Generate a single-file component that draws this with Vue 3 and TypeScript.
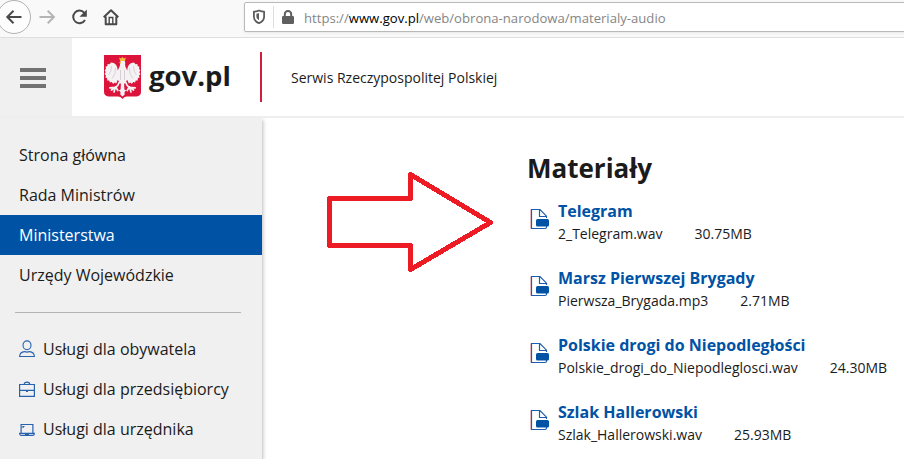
<script setup lang="ts">
type IconName = 'person' | 'briefcase' | 'laptop'

interface Material {
  title: string
  file: string
  size: string
}

const sections: { label: string; active?: boolean }[] = [
  { label: 'Strona główna' },
  { label: 'Rada Ministrów' },
  { label: 'Ministerstwa', active: true },
  { label: 'Urzędy Wojewódzkie' },
]

const services: { label: string; icon: IconName }[] = [
  { label: 'Usługi dla obywatela', icon: 'person' },
  { label: 'Usługi dla przedsiębiorcy', icon: 'briefcase' },
  { label: 'Usługi dla urzędnika', icon: 'laptop' },
]

const materials: Material[] = [
  { title: 'Telegram', file: '2_Telegram.wav', size: '30.75MB' },
  { title: 'Marsz Pierwszej Brygady', file: 'Pierwsza_Brygada.mp3', size: '2.71MB' },
  { title: 'Polskie drogi do Niepodległości', file: 'Polskie_drogi_do_Niepodleglosci.wav', size: '24.30MB' },
  { title: 'Szlak Hallerowski', file: 'Szlak_Hallerowski.wav', size: '25.93MB' },
]
</script>

<template>
  <div class="window">
    <div class="toolbar">
      <svg class="nav-icons" width="130" height="37" viewBox="0 0 130 37" fill="none">
        <circle cx="14" cy="17" r="16.5" fill="#fdfdfd" stroke="#b1b1b1" />
        <path d="M21.5 17H7.5M13.5 10.8L7.3 17l6.2 6.2" stroke="#4a4a4a" stroke-width="2" />
        <path d="M39.5 17h14M47.7 10.8l6.2 6.2-6.2 6.2" stroke="#b5b5b5" stroke-width="2" />
        <path d="M84.3 12.8A6.3 6.3 0 1 0 85 20" stroke="#4a4a4a" stroke-width="2" />
        <path d="M86.8 9.6v7.2h-7.3z" fill="#4a4a4a" />
        <path d="M103.7 17.3l7.3-7 7.3 7M105.7 16.5v7.7h10.6v-7.7" stroke="#4a4a4a" stroke-width="2" stroke-linejoin="round" />
        <path d="M109.2 24v-6.5h3.6V24" stroke="#4a4a4a" stroke-width="1.4" />
      </svg>
      <div class="address">
        <svg class="shield" width="14" height="16" viewBox="0 0 14 16" fill="none">
          <path d="M7 1.5c2 .9 3.5 1.2 5.1 1.2v5c0 3-2 5.2-5.1 6.5-3.1-1.3-5.1-3.5-5.1-6.5v-5c1.6 0 3.1-.3 5.1-1.2z" stroke="#5c5c5c" stroke-width="1.8" stroke-linejoin="round" />
          <path d="M7 4v7.2C5.2 10 4.4 9 4.4 7.2V4.7C5.5 4.6 6.2 4.4 7 4z" fill="#5c5c5c" />
        </svg>
        <span class="separator"></span>
        <svg class="lock" width="12" height="14" viewBox="0 0 12 14">
          <rect y="6" width="12" height="8" rx="1.2" fill="#5f5f5f" />
          <path d="M2.8 7V4.2a3.2 3.2 0 0 1 6.4 0V7" fill="none" stroke="#5f5f5f" stroke-width="2" />
        </svg>
        <span class="url">https://<b>www.gov.pl</b>/web/obrona-narodowa/materialy-audio</span>
      </div>
    </div>

    <header class="header">
      <div class="burger"><i></i><i></i><i></i></div>
      <svg class="emblem" width="37" height="44" viewBox="0 0 37 44">
        <path d="M0 0h37v36.5q0 4.5-4.5 5h-10q-2.4.2-4 2.5-1.6-2.3-4-2.5h-10Q0 41 0 36.5z" fill="#dc143c" />
        <g fill="#f5f2f4">
          <path id="wing" d="M7 7.500c4 0 6.500 3 6.700 7.500l2 3.500v8l-2-1.500-1.500 3.500-1.500-1-1.500 1.500-1.400-2-1.800.6-.8-2.200-2 .2v-2.400l-1.800-.6.6-2-1.500-1.600 1.200-1.700-1-2 1.300-1.600-.5-2 1.900-.8.200-2 1.900.4z" />
          <path d="M30 7.500c-4 0-6.500 3-6.700 7.500l-2 3.500v8l2-1.500 1.500 3.500 1.500-1 1.500 1.500 1.400-2 1.800.6.800-2.200 2 .2v-2.400l1.800-.6-.6-2 1.500-1.600-1.200-1.700 1-2-1.300-1.600.5-2-1.900-.8-.2-2-1.900.4z" />
          <path d="M16 8.500c0-2.500 1-3.500 2.700-3.500s2.800 1.300 2.500 3.200c-.3 1.800.1 3.300 1.200 5.300 1.300 2.500 1.400 6.500.6 10.500l-2 4.500h-5l-2-4.500c-.8-4-.7-8 .6-10.500 1.100-2 1.600-3.200 1.400-5z" />
          <path d="M17 27h3l.4 7.500 1.800 1-1.700 1.500.2 2.500-2.200 2-2.200-2 .2-2.500-1.700-1.500 1.800-1z" />
        </g>
        <path d="M15.300 27q-1.300 4.500-4.200 5.300l-5.300.5M11.500 32l-4 3M11.500 32l-1.500 5M11.800 32l2 3.500M21.700 27q1.300 4.500 4.200 5.300l5.300.5M25.500 32l4 3M25.500 32l1.500 5M25.200 32l-2 3.500" fill="none" stroke="#f5f2f4" stroke-width="1.7" stroke-linecap="round" />
        <path d="M11.500 13q.5 6-3.400 10.500M25.500 13q-.5 6 3.400 10.500M7.500 11q0 6-3 9M29.500 11q0 6 3 9M16.500 15v10M20.500 15v10" fill="none" stroke="#d0c6cd" stroke-width=".8" />
        <path d="M16 6l-.8-3.600 2 1 1.300-1.700 1.300 1.700 2-1-.8 3.600zM17 7l-2.400.8L17 8.800z" fill="#f6bd40" />
      </svg>
      <span class="brand">gov.pl</span>
      <span class="rule"></span>
      <span class="tagline">Serwis Rzeczypospolitej Polskiej</span>
    </header>

    <div class="body">
      <aside class="sidebar">
        <nav>
          <a v-for="s in sections" :key="s.label" class="item" :class="{ active: s.active }">{{ s.label }}</a>
        </nav>
        <div class="divider"></div>
        <nav>
          <a v-for="s in services" :key="s.label" class="item service">
            <svg width="16" height="18" viewBox="0 0 16 18" fill="none" stroke="#2861ae" stroke-width="1.1">
              <template v-if="s.icon === 'person'">
                <ellipse cx="8" cy="5.3" rx="4" ry="4.4" />
                <path d="M.6 16.5c.2-3.2 2.4-4.7 4.9-4.9q2.5 1 5 0c2.5.2 4.7 1.7 4.9 4.9z" />
              </template>
              <template v-else-if="s.icon === 'briefcase'">
                <path d="M.6 4.5h14.8v11.8H.6zM.6 10.3h14.8M5.2 4.5Q5.2 2.2 8 2.2t2.8 2.3" stroke-width="1.2" />
                <path d="M7 11.5h2" />
              </template>
              <template v-else>
                <path d="M2.1 13.3V4.5h11.8v8.800M4 8V6.5h1.500" stroke-width="1.2" />
                <path d="M.6 13.3h14.8q0 2-1.500 2H2.100q-1.500 0-1.500-2zM6 14.200h4" stroke-width="1.2" />
              </template>
            </svg>
            {{ s.label }}
          </a>
        </nav>
      </aside>

      <main class="content">
        <h2>Materiały</h2>
        <ul>
          <li v-for="m in materials" :key="m.file">
            <svg class="doc" width="20" height="22" viewBox="0 0 20 22" fill="none">
              <path d="M16.5 18v1q0 1.5-1.5 1.5H1.5V1.5H10l6.500 6.700V10M9.500 1.500v7h7" stroke="#1c5dad" stroke-width="1.2" />
              <path d="M.5 1.500v19" stroke="#e0a4b0" stroke-width=".7" />
              <rect x="6" y="11" width="13" height="7.500" rx="1.5" fill="#0052a5" />
            </svg>
            <div>
              <a class="title">{{ m.title }}</a>
              <div class="meta"><span>{{ m.file }}</span><span>{{ m.size }}</span></div>
            </div>
          </li>
        </ul>
      </main>
    </div>

    <svg class="arrow" width="172" height="106" viewBox="0 0 172 106">
      <path d="M4.5 32.5h81V8.5l80 48-80 47V79.5h-81z" fill="none" stroke="#ed1c24" stroke-width="5" stroke-linejoin="round" shape-rendering="crispEdges" />
    </svg>
  </div>
</template>

<style>
body {
  margin: 0;
  overflow: hidden;
}
</style>

<style scoped>
.window {
  position: relative;
  width: 904px;
  height: 459px;
  overflow: hidden;
  display: flex;
  flex-direction: column;
  background: #fff;
  color: #1b1b1b;
  font-family: "Open Sans", "Noto Sans", sans-serif;
}
.toolbar {
  flex: none;
  display: flex;
  height: 37px;
  background: #f9f9fa;
  border-bottom: 1px solid #dedede;
}
.nav-icons {
  flex: none;
  margin-right: 114px;
}
.address {
  box-sizing: border-box;
  display: flex;
  align-items: center;
  flex: 1;
  height: 30px;
  margin: 2px -4px 0 0;
  padding-left: 7px;
  background: #fff;
  border: 1px solid #b9b9b9;
  border-radius: 2px;
  box-shadow: 0 1px 3px #0001;
}
.separator {
  width: 1px;
  height: 22px;
  margin: 0 8px 0 7px;
  background: #ddd;
}
.lock {
  margin-right: 10px;
}
.url {
  padding-top: 2px;
  color: #858585;
  font: 13.12px "Open Sans", sans-serif;
  white-space: nowrap;
}
.url b {
  color: #000;
  font-weight: 400;
}
.header {
  flex: none;
  display: flex;
  align-items: center;
  height: 78px;
  border-bottom: 2px solid #eee;
}
.burger {
  box-sizing: border-box;
  width: 72px;
  height: 100%;
  display: flex;
  flex-direction: column;
  align-items: center;
  justify-content: center;
  gap: 4px;
  padding-top: 2px;
  background: #f0f0f0;
}
.burger i {
  width: 26px;
  height: 4px;
  margin-right: 6px;
  background: #727272;
}
.emblem {
  margin: 0 8px 0 32px;
}
.brand {
  width: 82px;
  padding-bottom: 2px;
  font-size: 27.5px;
  font-weight: 700;
  line-height: 38px;
}
.rule {
  width: 2px;
  height: 50px;
  margin: 0 29px;
  background: #d01f3c;
}
.tagline {
  font-size: 14px;
}
.body {
  flex: 1;
  display: flex;
  min-height: 0;
  overflow: hidden;
}
.sidebar {
  flex: none;
  width: 262px;
  padding-top: 17px;
  box-sizing: border-box;
  background: #f0f0f0;
  box-shadow: 1px 2px 4px #0004;
}
.item {
  display: flex;
  align-items: center;
  height: 40px;
  padding-left: 19px;
  font-size: 16px;
  white-space: nowrap;
}
.item.active {
  background: #0052a5;
  color: #fff;
}
.service {
  gap: 8px;
}
.divider {
  height: 1px;
  margin: 17px 21px 16px 15px;
  background: #b4b4b4;
}
.content {
  padding: 32px 0 0 265px;
}
h2 {
  margin: 0;
  font-size: 26px;
  line-height: 36px;
}
ul {
  list-style: none;
  margin: 14px 0 0;
  padding: 0;
}
li {
  display: flex;
  height: 67px;
}
.doc {
  flex: none;
  margin: 8px 8px 0 3px;
}
.title {
  display: block;
  color: #0052a5;
  font-size: 16px;
  font-weight: 700;
  line-height: 22px;
  white-space: nowrap;
}
.meta {
  display: flex;
  gap: 32px;
  font-size: 14px;
  line-height: 24px;
  white-space: nowrap;
}
.arrow {
  position: absolute;
  left: 325px;
  top: 166px;
}
</style>
